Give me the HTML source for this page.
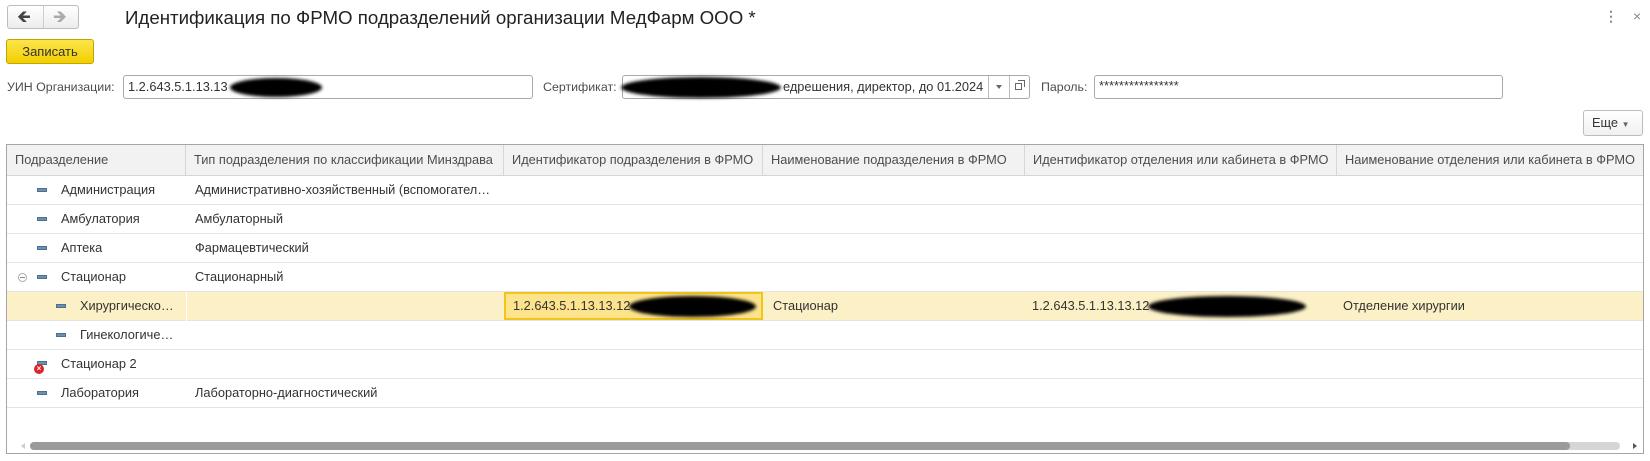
<!DOCTYPE html>
<html><head><meta charset="utf-8"><style>
*{box-sizing:border-box;margin:0;padding:0}
body{width:1650px;height:461px;background:#fff;font-family:"Liberation Sans",Arial,sans-serif;font-size:12.8px;color:#333;position:relative;overflow:hidden}
.a{position:absolute}
.inp{position:absolute;border:1px solid #a9a9a9;border-radius:3px;background:#fff;height:24px;line-height:22px;padding-left:4px;color:#333;white-space:nowrap;overflow:hidden}
.lbl{position:absolute;color:#4d4d4d;line-height:24px;font-size:12.4px}
.blob{position:absolute;background:#000;border-radius:50%;filter:blur(1.5px)}
.grid{position:absolute;left:6px;top:144px;width:1638px;height:310px;border:1px solid #a6a6a6;overflow:hidden}
.hd{position:absolute;top:0;height:31px;background:#f2f2f2;border-bottom:1px solid #d6d6d6;border-right:1px solid #d6d6d6;line-height:30px;padding-left:8px;color:#4d4d4d;white-space:nowrap;overflow:hidden}
.row{position:absolute;left:0;width:1636px;height:29px;border-bottom:1px solid #e4e4e4}
.c{position:absolute;top:0;line-height:28px;white-space:nowrap}
.ic{position:absolute;width:10px;height:4px;background:#6f8fae;border:1px solid #4f6f8e;top:12px}
</style></head><body>
<div class="a" style="left:7px;top:5px;width:72px;height:24px;border:1px solid #bdbdbd;border-radius:3px;background:linear-gradient(#fff,#ececec)"></div>
<div class="a" style="left:43px;top:6px;width:1px;height:22px;background:#cfcfcf"></div>
<div class="a" style="left:17px;top:4px;font-size:17px;color:#444">&#129144;</div>
<div class="a" style="left:53px;top:4px;font-size:17px;color:#aaa">&#129146;</div>
<div class="a" style="left:125px;top:7px;font-size:18.7px;color:#222">Идентификация по ФРМО подразделений организации МедФарм ООО *</div>
<div class="a" style="left:1604px;top:8px;font-size:14px;color:#888;font-weight:bold">⋮</div>
<div class="a" style="left:1633px;top:8px;font-size:14px;color:#888">×</div>
<div class="a" style="left:6px;top:39px;width:88px;height:25px;border:1px solid #c2a400;border-radius:3px;background:linear-gradient(#fbe54a,#f2cf00);text-align:center;line-height:23px;color:#333;font-size:13px">Записать</div>

<div class="lbl" style="left:7px;top:75px">УИН Организации:</div>
<div class="inp" style="left:123px;top:75px;width:410px">1.2.643.5.1.13.13</div>
<div class="blob" style="left:230px;top:78px;width:92px;height:19px"></div>
<div class="lbl" style="left:543px;top:75px">Сертификат:</div>
<div class="inp" style="left:622px;top:75px;width:408px;padding-left:160px">едрешения, директор, до 01.2024</div>
<div class="a" style="left:988px;top:76px;width:1px;height:22px;background:#bbb"></div>
<div class="a" style="left:1009px;top:76px;width:1px;height:22px;background:#bbb"></div>
<div class="a" style="left:996px;top:85px;border:3px solid transparent;border-top:4px solid #666"></div>
<div class="a" style="left:1015px;top:83px;width:7px;height:7px;border:1px solid #666"></div>
<div class="a" style="left:1018px;top:80px;width:7px;height:7px;border:1px solid #666;border-left:none;border-bottom:none"></div>
<div class="blob" style="left:621px;top:77px;width:160px;height:21px"></div>
<div class="lbl" style="left:1041px;top:75px">Пароль:</div>
<div class="inp" style="left:1094px;top:75px;width:409px;line-height:20px">****************</div>

<div class="a" style="left:1583px;top:110px;width:60px;height:26px;border:1px solid #bdbdbd;border-radius:3px;background:linear-gradient(#fff,#f0f0f0);line-height:24px;padding-left:8px;color:#333">Еще <span style="font-size:8px;color:#666">▼</span></div>

<div class="grid">
 <div class="hd" style="left:0;width:179px">Подразделение</div>
 <div class="hd" style="left:179px;width:318px">Тип подразделения по классификации Минздрава</div>
 <div class="hd" style="left:497px;width:259px">Идентификатор подразделения в ФРМО</div>
 <div class="hd" style="left:756px;width:262px">Наименование подразделения в ФРМО</div>
 <div class="hd" style="left:1018px;width:312px">Идентификатор отделения или кабинета в ФРМО</div>
 <div class="hd" style="left:1330px;width:310px;border-right:none">Наименование отделения или кабинета в ФРМО</div>

 <div class="row" style="top:31px"><div class="ic" style="left:30px"></div><div class="c" style="left:54px">Администрация</div><div class="c" style="left:188px">Административно-хозяйственный (вспомогател…</div></div>
 <div class="row" style="top:60px"><div class="ic" style="left:30px"></div><div class="c" style="left:54px">Амбулатория</div><div class="c" style="left:188px">Амбулаторный</div></div>
 <div class="row" style="top:89px"><div class="ic" style="left:30px"></div><div class="c" style="left:54px">Аптека</div><div class="c" style="left:188px">Фармацевтический</div></div>
 <div class="row" style="top:118px"><div class="a" style="left:11px;top:10px;width:9px;height:9px;border:1px solid #aaa;border-radius:50%"></div><div class="a" style="left:13px;top:14px;width:5px;height:1px;background:#888"></div><div class="ic" style="left:30px"></div><div class="c" style="left:54px">Стационар</div><div class="c" style="left:188px">Стационарный</div></div>
 <div class="row" style="top:147px;background:#fcf0c6">
  <div class="a" style="left:179px;top:0;width:1px;height:29px;background:#fff"></div>
  <div class="ic" style="left:49px"></div><div class="c" style="left:73px">Хирургическо…</div>
  <div class="a" style="left:497px;top:0;width:259px;height:28px;background:#fde38b;border:2px solid #f2c51a"></div>
  <div class="c" style="left:506px">1.2.643.5.1.13.13.12</div>
  <div class="blob" style="left:622px;top:4px;width:127px;height:21px"></div>
  <div class="c" style="left:766px">Стационар</div>
  <div class="c" style="left:1025px">1.2.643.5.1.13.13.12</div>
  <div class="blob" style="left:1141px;top:4px;width:158px;height:21px"></div>
  <div class="c" style="left:1336px">Отделение хирургии</div>
 </div>
 <div class="row" style="top:176px"><div class="ic" style="left:49px"></div><div class="c" style="left:73px">Гинекологиче…</div></div>
 <div class="row" style="top:205px"><div class="ic" style="left:30px;top:11px"></div><div class="a" style="left:27px;top:14px;width:10px;height:10px;border-radius:50%;background:#d9252a;color:#fff;font-size:8px;line-height:10px;text-align:center;font-weight:bold">×</div><div class="c" style="left:54px">Стационар 2</div></div>
 <div class="row" style="top:234px"><div class="ic" style="left:30px"></div><div class="c" style="left:54px">Лаборатория</div><div class="c" style="left:188px">Лабораторно-диагностический</div></div>

 <div class="a" style="left:11px;top:298px;border:3px solid transparent;border-right:4px solid #ccc"></div>
 <div class="a" style="left:23px;top:297px;width:1590px;height:8px;border-radius:4px;background:#d6d6d6"></div>
 <div class="a" style="left:23px;top:297px;width:1540px;height:8px;border-radius:4px;background:#9b9b9b"></div>
 <div class="a" style="left:1626px;top:298px;border:3px solid transparent;border-left:4px solid #555"></div>
</div>
</body></html>
